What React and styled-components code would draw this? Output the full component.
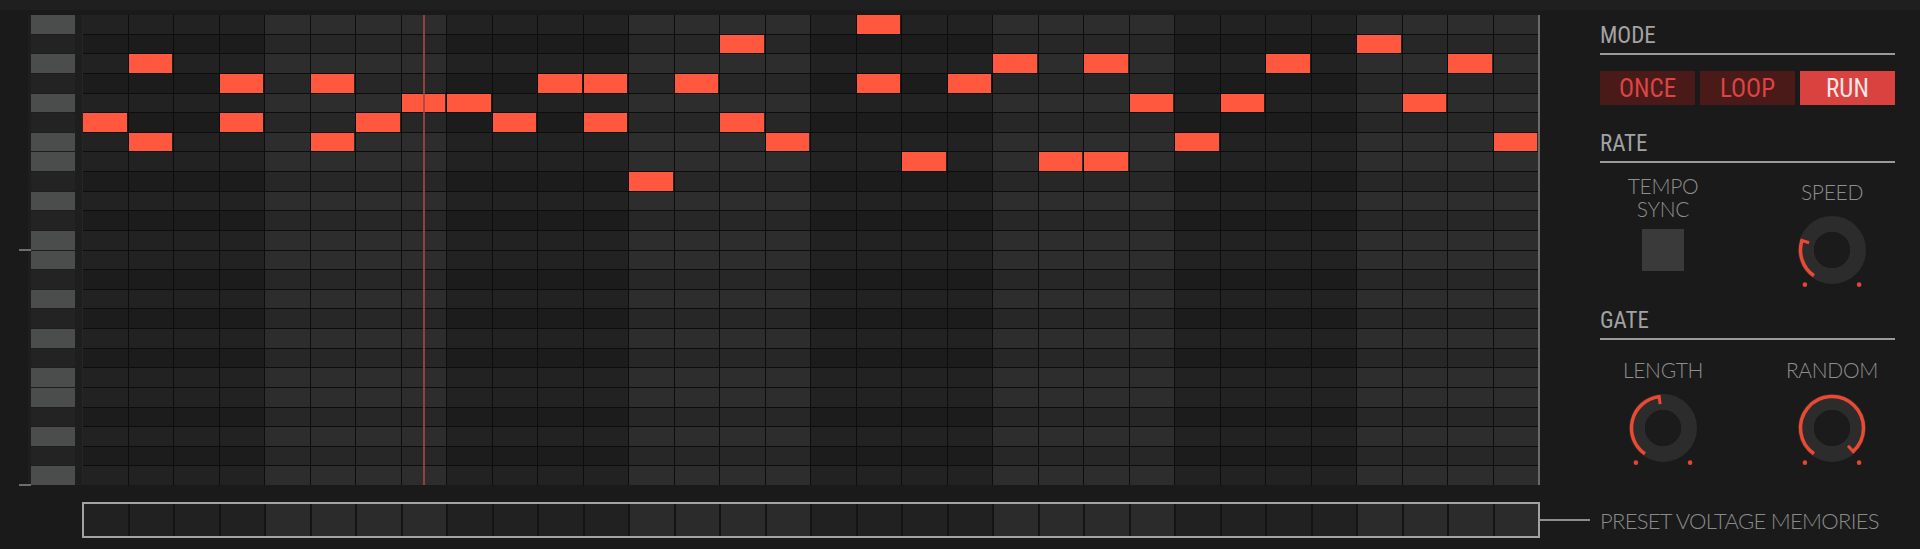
import styled, { createGlobalStyle } from 'styled-components';

const GlobalStyle = createGlobalStyle`
  html, body {
    margin: 0;
    padding: 0;
    background: #1a1a1a;
  }
`;

const COLS = 32;
const ROWS = 24;
const BLACK_KEYS = [1, 3, 5, 8, 10];

// column -> rows holding a step
const NOTES = {
  0: [5], 1: [2, 6], 3: [3, 5], 5: [3, 6], 6: [5], 7: [4], 8: [4], 9: [5],
  10: [3], 11: [3, 5], 12: [8], 13: [3], 14: [1, 5], 15: [6], 17: [0, 3],
  18: [7], 19: [3], 20: [2], 21: [7], 22: [2, 7], 23: [4], 24: [6], 25: [4],
  26: [2], 28: [1], 29: [4], 30: [2], 31: [6],
};

const Frame = styled.div`
  width: 1920px;
  height: 549px;
  box-sizing: border-box;
  padding-top: 15px;
  display: grid;
  grid-template-columns: 82px 1458px 1fr;
  grid-template-rows: 470px 36px;
  row-gap: 17px;
  background: linear-gradient(#1f1f1f 0, #1f1f1f 9px, #1a1a1a 11px);
  overflow: hidden;
`;

const Keyboard = styled.div`
  display: grid;
  grid-template-rows: repeat(${ROWS}, 1fr);
  row-gap: 1px;
  padding-left: 19px;
  background: linear-gradient(to right, transparent 28px, #1e1e1e 28px);
`;

const KeyRow = styled.div`
  display: flex;
  align-items: flex-end;
`;

const Tick = styled.span`
  width: 12px;
  height: 2px;
  margin-bottom: -1px;
  background: ${(p) => (p.$show ? '#6e6e6e' : 'transparent')};
`;

const Key = styled.span`
  width: 44px;
  height: 100%;
  background: ${(p) => (p.$black ? '#232323' : '#4b4c4c')};
`;

const Roll = styled.div`
  position: relative;
  display: grid;
  grid-template-columns: repeat(${COLS}, 1fr);
  grid-template-rows: repeat(${ROWS}, 1fr);
  gap: 1px;
  background: #0d0d0d;
  border-left: 1px solid #262626;
  border-right: 2px solid #6a6a6a;
`;

const Cell = styled.div`
  display: flex;
  background: ${(p) =>
    p.$light ? (p.$black ? '#272727' : '#2d2d2d') : p.$black ? '#1c1c1c' : '#222222'};
`;

const Note = styled.div`
  flex: 1;
  margin-right: 1px;
  background: #ff583f;
`;

const Playhead = styled.div`
  position: absolute;
  top: 0;
  bottom: 0;
  left: 340px;
  width: 2px;
  background: #a2463f;
  opacity: 0.85;
`;

const Panel = styled.div`
  padding: 0 25px 0 60px;
  display: flex;
  flex-direction: column;
`;

const SectionHeader = styled.div`
  margin-top: ${(p) => p.$top}px;
  padding-bottom: 6px;
  border-bottom: 2px solid #9a9a9a;
  font-family: 'Roboto Condensed', Roboto, sans-serif;
  font-size: 23px;
  line-height: 23px;
  color: #a3a3a3;
`;

const ModeButtons = styled.div`
  margin-top: 16px;
  display: grid;
  grid-template-columns: repeat(3, 1fr);
  gap: 5px;
`;

const ModeButton = styled.div`
  height: 34px;
  display: flex;
  align-items: center;
  justify-content: center;
  font-family: 'Roboto Condensed', Roboto, sans-serif;
  font-size: 25px;
  background: ${(p) => (p.$active ? '#da423f' : '#4a1a19')};
  color: ${(p) => (p.$active ? '#f4e6e6' : '#dc4543')};
`;

const ControlRow = styled.div`
  margin-top: ${(p) => p.$top}px;
  height: ${(p) => p.$height}px;
  display: flex;
  justify-content: space-between;
`;

const ControlColumn = styled.div`
  width: 126px;
  padding-top: ${(p) => p.$pad || 0}px;
  display: flex;
  flex-direction: column;
  align-items: center;
`;

const ControlLabel = styled.div`
  font-family: Lato, 'Open Sans', sans-serif;
  font-weight: 300;
  font-size: 21px;
  line-height: 23px;
  text-align: center;
  color: #8e8e8e;
  letter-spacing: -0.3px;
`;

const SyncBox = styled.div`
  margin-top: 9px;
  width: 42px;
  height: 42px;
  background: #3a3a3a;
`;

const KnobSvg = styled.svg`
  margin-top: 9px;
  display: block;
`;

const PresetStrip = styled.div`
  display: grid;
  grid-template-columns: repeat(${COLS}, 1fr);
  gap: 2px;
  background: #141414;
  border: 2px solid #a3a3a3;
`;

const PresetCell = styled.div`
  background: ${(p) => (p.$light ? '#2b2b2b' : '#212121')};
`;

const PresetLegend = styled.div`
  display: flex;
  align-items: center;
`;

const Connector = styled.span`
  width: 50px;
  height: 2px;
  margin-right: 10px;
  background: #8e8e8e;
`;

const PresetLabel = styled.span`
  font-family: Lato, 'Open Sans', sans-serif;
  font-weight: 300;
  font-size: 22px;
  color: #8a8a8a;
  letter-spacing: -0.7px;
  white-space: nowrap;
`;

function Knob({ value }) {
  const cx = 45;
  const cy = 38;
  const start = -145;
  const end = 145;
  const ang = start + (end - start) * value;
  const pt = (r, a) => {
    const t = (a * Math.PI) / 180;
    return [cx + r * Math.sin(t), cy - r * Math.cos(t)];
  };
  const [sx, sy] = pt(31.5, start);
  const [ex, ey] = pt(31.5, ang);
  const [t1x, t1y] = pt(33.2, ang);
  const [t2x, t2y] = pt(24, ang);
  const [d1x, d1y] = pt(44, -142);
  const [d2x, d2y] = pt(44, 142);
  const large = ang - start > 180 ? 1 : 0;
  return (
    <KnobSvg width="90" height="78" viewBox="0 0 90 78">
      <circle cx={cx} cy={cy} r="26" fill="none" stroke="#2c2c2c" strokeWidth="16" />
      <circle cx={cx} cy={cy} r="18" fill="#1b1b1b" />
      <path
        d={`M ${sx} ${sy} A 31.5 31.5 0 ${large} 1 ${ex} ${ey}`}
        fill="none"
        stroke="#ec4932"
        strokeWidth="3.5"
      />
      <line x1={t1x} y1={t1y} x2={t2x} y2={t2y} stroke="#ec4932" strokeWidth="3" />
      <circle cx={d1x} cy={d1y} r="2.3" fill="#e4452f" />
      <circle cx={d2x} cy={d2y} r="2.3" fill="#e4452f" />
    </KnobSvg>
  );
}

export default function App() {
  const rows = Array.from({ length: ROWS }, (_, r) => r);
  const cols = Array.from({ length: COLS }, (_, c) => c);

  return (
    <>
      <GlobalStyle />
      <Frame>
        <Keyboard>
          {rows.map((r) => (
            <KeyRow key={r}>
              <Tick $show={r % 12 === 11} />
              <Key $black={BLACK_KEYS.includes(r % 12)} />
            </KeyRow>
          ))}
        </Keyboard>

        <Roll>
          {rows.map((r) =>
            cols.map((c) => (
              <Cell
                key={`${r}-${c}`}
                $light={Math.floor(c / 4) % 2 === 1}
                $black={BLACK_KEYS.includes(r % 12)}
              >
                {NOTES[c] && NOTES[c].includes(r) && <Note />}
              </Cell>
            ))
          )}
          <Playhead />
        </Roll>

        <Panel>
          <SectionHeader $top={9}>MODE</SectionHeader>
          <ModeButtons>
            <ModeButton>ONCE</ModeButton>
            <ModeButton>LOOP</ModeButton>
            <ModeButton $active>RUN</ModeButton>
          </ModeButtons>

          <SectionHeader $top={27}>RATE</SectionHeader>
          <ControlRow $top={11} $height={122}>
            <ControlColumn>
              <ControlLabel>
                TEMPO
                <br />
                SYNC
              </ControlLabel>
              <SyncBox />
            </ControlColumn>
            <ControlColumn $pad={6}>
              <ControlLabel>SPEED</ControlLabel>
              <Knob value={0.25} />
            </ControlColumn>
          </ControlRow>

          <SectionHeader $top={13}>GATE</SectionHeader>
          <ControlRow $top={18} $height={110}>
            <ControlColumn>
              <ControlLabel>LENGTH</ControlLabel>
              <Knob value={0.476} />
            </ControlColumn>
            <ControlColumn>
              <ControlLabel>RANDOM</ControlLabel>
              <Knob value={0.976} />
            </ControlColumn>
          </ControlRow>
        </Panel>

        <div />
        <PresetStrip>
          {cols.map((c) => (
            <PresetCell key={c} $light={Math.floor(c / 4) % 2 === 1} />
          ))}
        </PresetStrip>
        <PresetLegend>
          <Connector />
          <PresetLabel>PRESET VOLTAGE MEMORIES</PresetLabel>
        </PresetLegend>
      </Frame>
    </>
  );
}
